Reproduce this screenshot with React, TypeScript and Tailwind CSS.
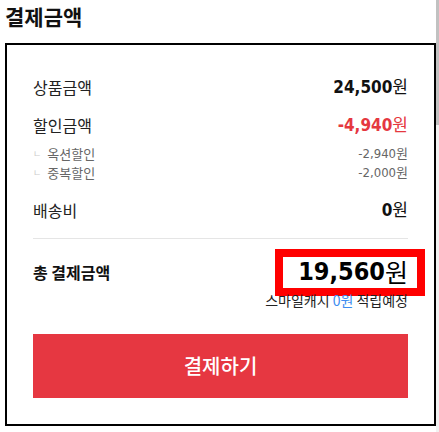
const KR = 'font-["Noto_Sans_CJK_KR","Noto_Sans",sans-serif]';
const NUM = 'font-["DejaVu_Sans_Condensed","DejaVu_Sans","Noto_Sans_CJK_KR",sans-serif]';

function Row({ label, value, red }: { label: string; value: string; red?: boolean }) {
  return (
    <div className="flex h-[28px] items-center justify-between">
      <span className={`${KR} text-[16px] text-[#222]`}>{label}</span>
      <span className={`${NUM} text-[17px] ${red ? 'text-[#e5383f]' : 'text-[#111]'}`}>
        <span className="font-bold">{value}</span>
        <span className={KR}>원</span>
      </span>
    </div>
  );
}

function SubRow({ label, value }: { label: string; value: string }) {
  return (
    <div className="flex h-[19px] items-center justify-between">
      <span className={`${KR} flex items-center text-[13px] text-[#666]`}>
        <span className="mr-[6px] text-[9px] text-[#ccc]">ㄴ</span>
        {label}
      </span>
      <span className={`${NUM} text-[13px] text-[#666]`}>
        {value}
        <span className={KR}>원</span>
      </span>
    </div>
  );
}

export default function App() {
  return (
    <div className="flex h-[432px] w-[439px] bg-white">
      <main className="flex-1 pl-[5px]">
        <h2 className={`${KR} pt-[3px] text-[21px] font-bold leading-[26px] text-[#111]`}>결제금액</h2>

        <section className="mt-[14px] h-[383px] border-2 border-black px-[26px] pt-[28px]">
          <Row label="상품금액" value="24,500" />
          <div className="mt-[10px]">
            <Row label="할인금액" value="-4,940" red />
          </div>
          <div className="mt-[5px]">
            <SubRow label="옥션할인" value="-2,940" />
            <SubRow label="중복할인" value="-2,000" />
          </div>
          <div className="mt-[14px]">
            <Row label="배송비" value="0" />
          </div>
          <div className="mt-[14px] h-px bg-[#e5e5e5]" />

          <div className="mt-[13px] flex h-[40px] items-center justify-between">
            <span className={`${KR} text-[16px] font-bold text-[#111]`}>총 결제금액</span>
            <span
              className={`${NUM} mr-[-9px] flex h-[31px] w-[134px] items-center justify-end pr-[9px] text-[25px] text-black outline-8 outline-[#ff0000]`}
            >
              <span className="font-bold">19,560</span>
              <span className={KR}>원</span>
            </span>
          </div>
          <div className={`${KR} flex h-[16px] items-center justify-end text-[14px] text-[#222]`}>
            스마일캐시&nbsp;<span className="text-[#3c8cf0]">0원</span>&nbsp;적립예정
          </div>

          <button
            className={`${KR} mt-[26px] flex h-[64px] w-full items-center justify-center bg-[#e63741] text-[20px] font-medium text-white`}
          >
            결제하기
          </button>
        </section>
      </main>

      <div className="flex w-[3px] flex-col bg-[#f1f1f1]">
        <div className="h-[125px] bg-[#c1c1c1]" />
      </div>
    </div>
  );
}
